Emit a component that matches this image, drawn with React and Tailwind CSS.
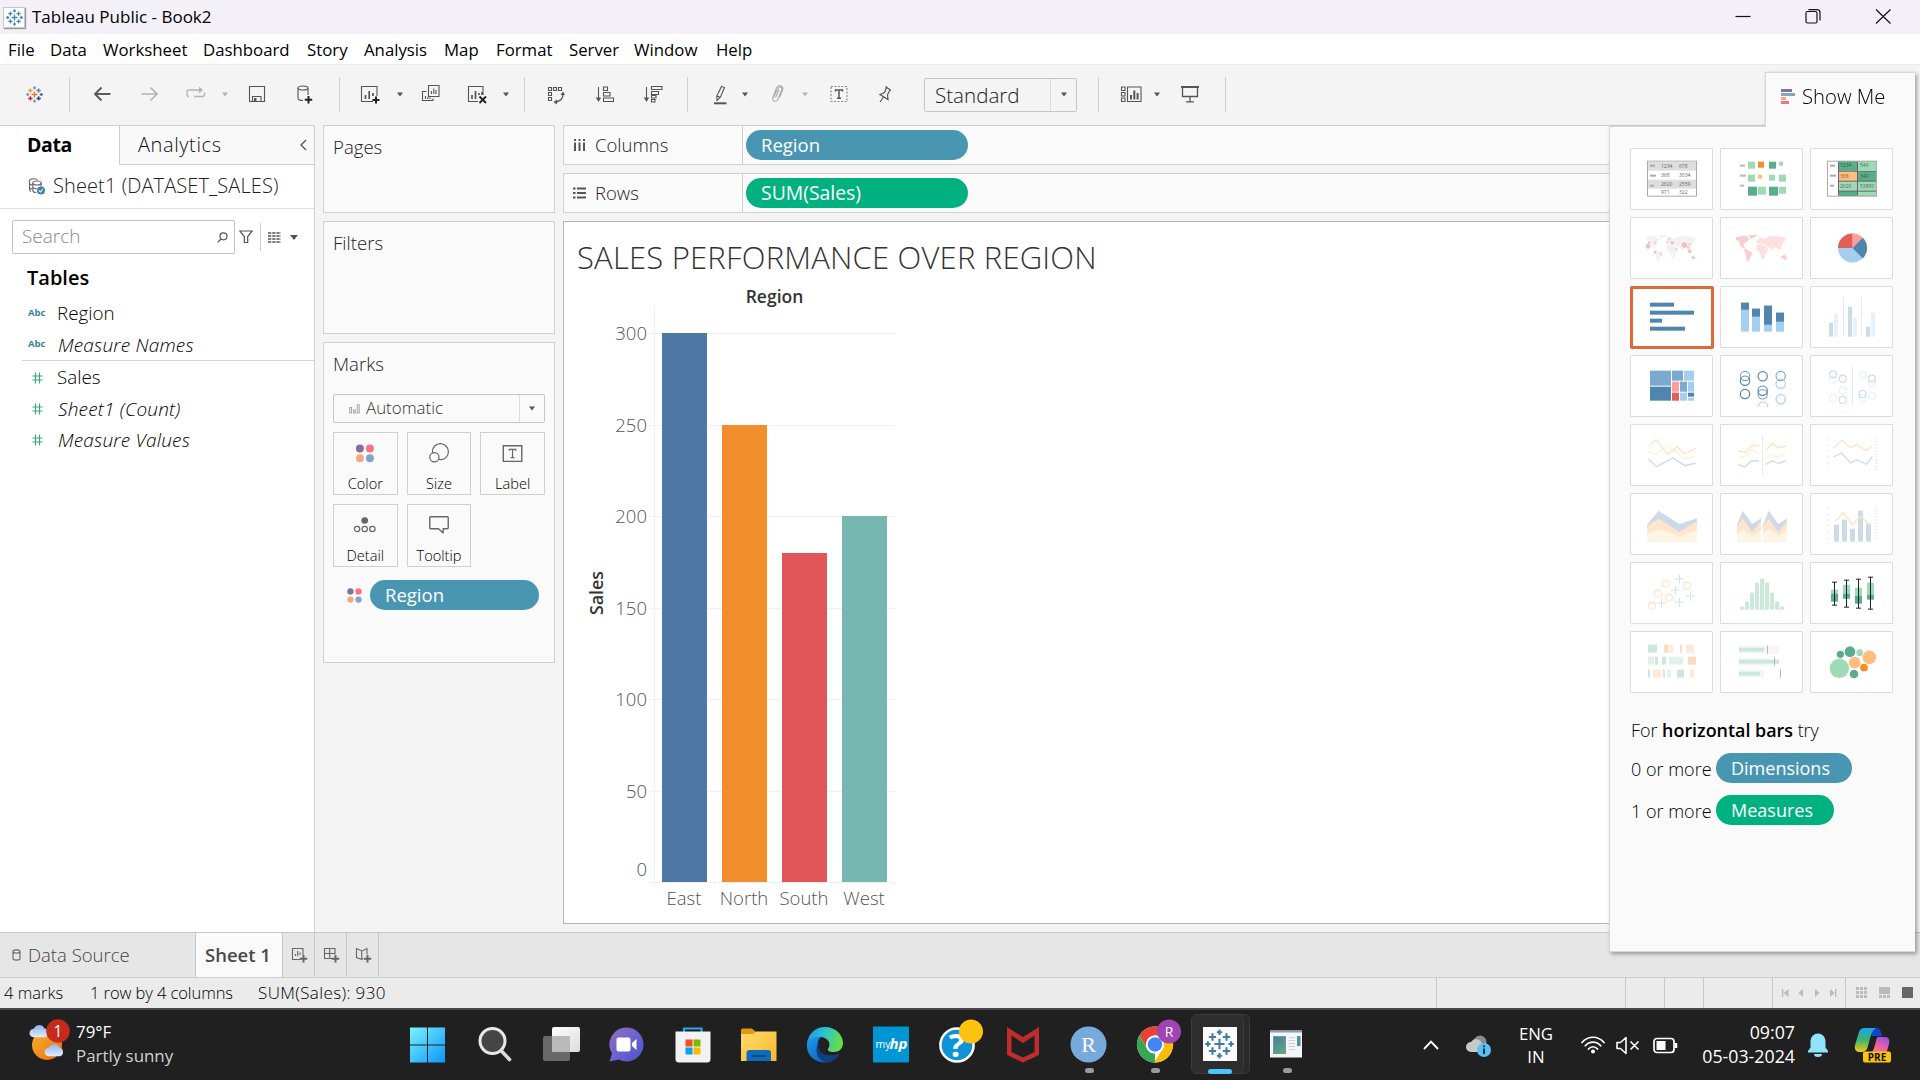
import React from 'react';

/* ---------- shared bits ---------- */

function Caret({ className = '', color = '#555' }) {
  return (
    <svg width="6" height="5" viewBox="0 0 6 5" className={'shrink-0 ' + className}>
      <path d="M0 0.5H6L3 4.5Z" fill={color} />
    </svg>
  );
}

function Tool({ w, className = '', children, stroke = '#555' }) {
  return (
    <svg width={w} height="21" viewBox={`0 0 ${w} 21`} fill="none" stroke={stroke} strokeWidth="1.1" className={'shrink-0 ' + className}>
      {children}
    </svg>
  );
}

function Sep({ className }) {
  return <div className={'h-[35px] w-px shrink-0 bg-[#cfcfcf] ' + className} />;
}

function TableauMark({ size, h, colors, sw = 1.5, className = '' }) {
  const arms = [
    [12, 12, 4.2], [6.2, 6.4, 3], [17.8, 6.4, 3], [6.2, 17.6, 3], [17.8, 17.6, 3],
    [12, 2.6, 2.2], [12, 21.4, 2.2], [2.4, 12, 2.2], [21.6, 12, 2.2],
  ];
  return (
    <svg width={size} height={h || size} viewBox="0 0 24 24" preserveAspectRatio="none" fill="none" strokeWidth={sw} className={'shrink-0 ' + className}>
      {arms.map(([x, y, r], i) => (
        <path key={i} d={`M${x - r} ${y}H${x + r}M${x} ${y - r}V${y + r}`} stroke={colors[i % colors.length]} />
      ))}
    </svg>
  );
}

function ColorDots({ w, className = '' }) {
  return (
    <svg width={w} height={w} viewBox="0 0 20 20" className={className}>
      <circle cx="4.6" cy="4.6" r="4.2" fill="#84709b" />
      <circle cx="15.4" cy="4.6" r="4.2" fill="#fc7182" />
      <circle cx="4.6" cy="15.4" r="4.2" fill="#f5a77e" />
      <circle cx="15.4" cy="15.4" r="4.2" fill="#81a3cc" />
    </svg>
  );
}

/* ---------- top bars ---------- */

function TitleBar() {
  return (
    <div className="flex h-[34px] items-center bg-[#f3f0f8]">
      <div className="ml-[3px] flex h-[21px] w-[22px] items-center justify-center border border-[#c8c8c8] bg-white shadow-[1px_1px_1px_#999]">
        <TableauMark size={17} h={17} colors={['#3d8bbd']} sw={1.8} />
      </div>
      <span className="ml-[7px] text-[17px] text-black">Tableau Public - Book2</span>
      <svg width="160" height="34" viewBox="0 0 160 34" fill="none" stroke="#111" strokeWidth="1.2" className="ml-auto mr-[25px]">
        <path d="M0.5 16.5H15.5" />
        <path d="M71 13a1.5 1.5 0 0 1 1.5-1.5h8A1.5 1.5 0 0 1 82 13v8.500a1.500 1.500 0 0 1-1.500 1.500h-8a1.500 1.500 0 0 1-1.500-1.500z" />
        <path d="M73.500 9.700H82a3 3 0 0 1 3 3V20.500" />
        <path d="M141 9.500L155.500 23.500M155.500 9.500L141 23.500" />
      </svg>
    </div>
  );
}

function MenuBar() {
  return (
    <div className="flex h-[30px] items-center bg-white pl-[8px] pt-[2px] text-[16.800px] text-black">
      <span className="w-[42px]">File</span>
      <span className="w-[53px]">Data</span>
      <span className="w-[100px]">Worksheet</span>
      <span className="w-[104px]">Dashboard</span>
      <span className="w-[57px]">Story</span>
      <span className="w-[80px]">Analysis</span>
      <span className="w-[52px]">Map</span>
      <span className="w-[73px]">Format</span>
      <span className="w-[65px]">Server</span>
      <span className="w-[82px]">Window</span>
      <span>Help</span>
    </div>
  );
}

function Toolbar() {
  return (
    <div className="flex h-[61px] items-center border-t border-[#ebebeb] bg-[#f4f4f4] pb-px">
      <TableauMark size={17} h={17} className="ml-[26px] mr-px mb-px" colors={['#e8762d', '#eb9b3b', '#5b879b', '#c72037', '#1f457e', '#7199a6', '#7099a6', '#7199a6', '#5b6591']} sw={1.9} />
      <Sep className="ml-[25px]" />
      <Tool w={18} className="ml-[23px]" stroke="#5a5a5a"><path strokeWidth="1.9" d="M17.500 10H2M8.500 3.500L2 10l6.500 6.500" /></Tool>
      <Tool w={18} className="ml-[30px]" stroke="#b4b4b4"><path strokeWidth="1.7" d="M0.500 10H16M9.500 3.500L16 10l-6.500 6.500" /></Tool>
      <Tool w={20} className="ml-[27px]" stroke="#b4b4b4">
        <path strokeWidth="1.300" d="M3 12.500H2.500A2 2 0 0 1 1 10.500V8a2 2 0 0 1 2-2h11.500M8 12.500h8.500a2 2 0 0 0 2-2V8.500" />
        <path d="M13 2.500L17 6l-4 3.500z" fill="#b4b4b4" stroke="none" />
      </Tool>
      <Caret className="ml-[16px]" color="#b4b4b4" />
      <Tool w={18} className="ml-[20px]">
        <path d="M1.500 2.500H16.500V17.500H1.500zM4.500 17.500V12.500H13V17.500" /><path d="M6 14h2.500v3.500H6z" fill="#555" stroke="none" />
      </Tool>
      <Tool w={18} className="ml-[30px]">
        <ellipse cx="7" cy="4" rx="5" ry="2" /><path d="M2 4v10.500c0 1.200 2 2 5 2M12 4v7" />
        <path stroke="#222" strokeWidth="2" d="M12.500 12v7.500M8.800 15.700H16.200" />
      </Tool>
      <Sep className="ml-[25px]" />
      <Tool w={20} className="ml-[20px]">
        <path d="M13 17.500H1.500V2.500H17V12" /><path strokeWidth="1.700" d="M5.500 15v-4M9.200 15V7M12.900 12V9" />
        <path stroke="#222" strokeWidth="2" d="M16 12.500v7M12.500 16H19.500" />
      </Tool>
      <Caret className="ml-[17px]" />
      <Tool w={20} className="ml-[18px]">
        <path d="M7.500 1.500H18V12.500H7.500zM5.500 7.500H1.500V16.500H12V14.500" /><path d="M10.500 10V7M12.800 10V4.500M15 10V6M4.500 15v-3M6.800 15v-2M9 15v-1.500" />
      </Tool>
      <Tool w={20} className="ml-[26px]">
        <path d="M11 17.500H1.500V2.500H16V11" /><path strokeWidth="1.700" d="M5 15v-4M8.500 15V7M12 11V9M15 11V8" />
        <path stroke="#222" strokeWidth="1.900" d="M12.500 12.500l6.500 6.500M19 12.500l-6.500 6.500" />
      </Tool>
      <Caret className="ml-[16px]" />
      <Sep className="ml-[15px]" />
      <Tool w={18} className="ml-[22px]">
        <path d="M1.500 3.500h3v3h-3zM6.500 3.500h3v3h-3zM11.500 3.500h3v3h-3zM1.500 8.500h3v3h-3zM1.500 13.500h3v3h-3z" />
        <path strokeWidth="1.300" d="M16 10c0 4-2.500 7-7 8" /><path d="M13.500 11L16 7.500 18 11zM10 15.500L6.500 18l3.500 2.500z" fill="#555" stroke="none" />
      </Tool>
      <Tool w={20} className="ml-[30px]">
        <path d="M3.500 3V15" /><path d="M0.800 13.500H6.200L3.500 18z" fill="#555" stroke="none" />
        <path d="M8.500 3h4v3.500h-4zM8.500 8.500h6.500v3.500H8.500zM8.500 14h10v3.500h-10z" />
      </Tool>
      <Tool w={20} className="ml-[28px]">
        <path d="M3.500 3V15" /><path d="M0.800 13.500H6.200L3.500 18z" fill="#555" stroke="none" />
        <path d="M8.500 2.500h10.500v3h-10.500zM8.500 7.500h7v3h-7zM8.500 11.500h4.500v2.500H8.500zM8.500 15.500h3.500v2.500h-3.500z" />
      </Tool>
      <Sep className="ml-[24px]" />
      <Tool w={18} className="ml-[24px]">
        <path d="M9.500 2.500L12.500 3.500 8.500 13 5 16.500 4.800 12zM4.800 12l3.700 1.200" /><path strokeWidth="2" d="M2 19.300H14.500" />
      </Tool>
      <Caret className="ml-[12px]" />
      <Tool w={18} className="ml-[21px]" stroke="#ababab">
        <path d="M4.500 13L8.500 5.500c2-4 5.500-2.500 4 1L8.800 15.500c-1.500 3-6 2-5-1.500L7.500 4c1.500-3.500 6.500-3 6.500 1L10.500 13.500M6.500 13.500L10 6" />
      </Tool>
      <Caret className="ml-[15px]" color="#b4b4b4" />
      <Tool w={18} className="ml-[22px]">
        <path stroke="#888" strokeDasharray="2 1.500" d="M1 2.500H17V17.500H1z" />
        <path strokeWidth="1.500" d="M5.500 7.500V6H12.500V7.500M9 6V14M7 14.200H11" />
      </Tool>
      <Tool w={18} className="ml-[28px]">
        <path strokeWidth="1.200" d="M9.500 2.500L15 6.500M10.500 3.500L8.500 8.500 4 10.500 12 15.500 11.500 10.800 14 6M7.500 13L4 18" />
      </Tool>
      <div className="ml-[30px] flex h-[34px] w-[153px] rounded-[2px] border border-[#c6c6c6]">
        <span className="w-[126px] border-r border-[#dcdcdc] pl-[10px] text-[20.600px] font-light leading-[32px] text-[#222]">Standard</span>
        <span className="flex flex-1 items-center justify-center"><Caret /></span>
      </div>
      <Sep className="ml-[21px]" />
      <Tool w={22} className="ml-[21px]">
        <path d="M1.500 3h3.500v3.500H1.500zM1.500 8.500h3.500v3.500H1.500zM1.500 14h3.500v3.500H1.500zM7.500 3H21V17.500H7.500z" /><path strokeWidth="2" d="M11 15.500V11M14.300 15.500V6.500M17.600 15.500V9" />
      </Tool>
      <Caret className="ml-[12px]" />
      <Tool w={20} className="ml-[20px]">
        <path strokeWidth="2" d="M1 3H19" /><path strokeWidth="1.300" d="M2.500 4V12.500H17.500V4M10 12.500V17.500M6 17.800H14" />
      </Tool>
      <Sep className="ml-[25px]" />
    </div>
  );
}

/* ---------- data pane ---------- */

function Field({ type, label, italic }) {
  return (
    <div className="flex h-[31px] items-center">
      {type === 'abc' ? (
        <span className="w-[57px] pl-[28px] text-[9.500px] font-bold text-[#3b7f9f]">Abc</span>
      ) : (
        <span className="w-[57px] pl-[32px]">
          <svg width="11" height="12" viewBox="0 0 11 12" stroke="#3ea77c" strokeWidth="1.200" fill="none"><path d="M3.500 0.500V11.500M7.500 0.500V11.500M0.500 4H10.500M0.500 8H10.500" /></svg>
        </span>
      )}
      <span className={italic ? 'pl-px pt-px text-[19px] font-light italic tracking-[0.200px] text-black' : 'text-[18.800px] font-light text-black'}>{label}</span>
    </div>
  );
}

function DataPane() {
  return (
    <div className="flex w-[315px] shrink-0 flex-col border-r border-t border-[#cfcfcf] bg-white">
      <div className="flex h-[39px]">
        <span className="w-[119px] pl-[27px] text-[19.500px] font-bold leading-[38px] tracking-[-0.400px] text-black">Data</span>
        <div className="flex flex-1 items-center border-b border-l border-[#cfcfcf] bg-[#f9f9f9] pl-[18px]">
          <span className="text-[20px] font-light tracking-[0.600px] text-[#111]">Analytics</span>
          <svg width="7" height="12" viewBox="0 0 7 12" fill="none" stroke="#555" strokeWidth="1.300" className="ml-auto mr-[7px]"><path d="M6 1L1 6l5 5" /></svg>
        </div>
      </div>
      <div className="flex h-[44px] items-center border-b border-[#dedede] pb-px pl-[28px]">
        <svg width="18" height="18" viewBox="0 0 18 18" fill="none" stroke="#666" strokeWidth="1.100">
          <path d="M3 14.500C1.500 14 1.500 13 1.500 12V3.500C2 1.500 8 1 9.500 3M1.500 6.500C2 8 4 8 4.500 8M1.500 10.500c.5 1.500 2 1.500 3 1.500" />
          <ellipse cx="9" cy="6" rx="4.200" ry="2" /><path d="M4.800 6v7.500c0 1.500 2 2 3.500 2M13.200 6v3.500M4.800 9.800c.5 1.500 2.500 2 4 2" />
          <circle cx="13" cy="13.500" r="4" fill="#3b84a3" stroke="none" /><path stroke="#fff" d="M11 13.500l1.500 1.500 2.500-3" />
        </svg>
        <span className="ml-[7px] text-[20px] font-light tracking-[0.100px] text-[#222]">Sheet1 (DATASET_SALES)</span>
      </div>
      <div className="mt-[11px] flex h-[34px] items-center pl-[12px]">
        <div className="flex h-[34px] w-[223px] items-center rounded-[2px] border border-[#c4c4c4] pl-[9px]">
          <span className="pb-[2px] text-[19px] font-light text-[#8a8a8a]">Search</span>
          <svg width="11" height="11" viewBox="0 0 11 11" fill="none" stroke="#555" strokeWidth="1.200" className="ml-auto mr-[6px]"><circle cx="6.500" cy="4.300" r="3.500" /><path d="M4 7L0.700 10.300" /></svg>
        </div>
        <svg width="14" height="14" viewBox="0 0 14 14" fill="none" stroke="#555" strokeWidth="1.200" className="ml-[4px]"><path d="M0.800 1H13.200L8.700 6.500V12.500H5.300V6.500z" /></svg>
        <div className="ml-[7px] h-[28px] w-px bg-[#cfcfcf]" />
        <svg width="13" height="11" viewBox="0 0 13 11" stroke="#555" strokeWidth="1.400" className="ml-[7px]"><path strokeDasharray="3.300 0.900" d="M0 1H13M0 4H13M0 7H13M0 10H13" /></svg>
        <svg width="8" height="5" viewBox="0 0 8 5" className="ml-[9px]"><path d="M0 0H8L4 5z" fill="#555" /></svg>
      </div>
      <span className="mt-[9px] h-[30px] pl-[27px] text-[20px] font-semibold leading-[30px] text-black">Tables</span>
      <div className="mt-[5px] flex flex-col">
        <Field type="abc" label="Region" />
        <Field type="abc" label="Measure Names" italic />
        <div className="ml-[22px] h-px bg-[#d6d6d6]" />
        <div className="mt-px flex flex-col">
          <Field type="num" label="Sales" />
          <Field type="num" label="Sheet1 (Count)" italic />
          <Field type="num" label="Measure Values" italic />
        </div>
      </div>
    </div>
  );
}

/* ---------- cards ---------- */

function MarkButton({ label, children }) {
  return (
    <div className="flex h-[63px] flex-col items-center border border-[#cfcfcf]">
      <svg width="30" height="26" viewBox="0 0 30 26" fill="none" stroke="#666" strokeWidth="1.300" className="mt-[9px]">{children}</svg>
      <span className="mt-[6px] text-[14.600px] font-light leading-[22px] text-black">{label}</span>
    </div>
  );
}

function Cards() {
  return (
    <div className="ml-[8px] flex w-[232px] shrink-0 flex-col gap-[8px] text-[18.600px] font-light text-[#222]">
      <div className="h-[88px] border border-[#cfcfcf] bg-[#fafafa] pl-[9px] leading-[41px]">Pages</div>
      <div className="h-[113px] border border-[#cfcfcf] bg-[#fafafa] pl-[9px] leading-[41px]">Filters</div>
      <div className="flex h-[321px] flex-col border border-[#cfcfcf] bg-[#fafafa] px-[9px]">
        <span className="h-[51px] leading-[41px]">Marks</span>
        <div className="flex h-[29px] w-[212px] rounded-[2px] border border-[#c6c6c6]">
          <div className="flex w-[186px] items-center border-r border-[#dcdcdc] pl-[15px]">
            <svg width="11" height="10" viewBox="0 0 11 10" fill="none" stroke="#aaa" strokeWidth="1.100"><path d="M0.700 3.500H2.500V9H0.700zM4.500 6H6.300V9H4.500zM8.300 0.700H10.200V9H8.300z" /></svg>
            <span className="ml-[6px] pb-px text-[16.900px] leading-[26px] text-[#333]">Automatic</span>
          </div>
          <div className="flex flex-1 items-center justify-center pr-px"><Caret /></div>
        </div>
        <div className="mt-[9px] grid w-[212px] grid-cols-3 gap-[9px]">
          <MarkButton label="Color">
            <g stroke="none"><circle cx="9.500" cy="7" r="4.300" fill="#84709b" /><circle cx="20.300" cy="7" r="4.300" fill="#fc7182" /><circle cx="9.500" cy="17.600" r="4.300" fill="#f5a77e" /><circle cx="20.300" cy="17.600" r="4.300" fill="#81a3cc" /></g>
          </MarkButton>
          <MarkButton label="Size">
            <circle cx="16.500" cy="10.500" r="8.700" /><circle cx="10" cy="16.500" r="5" fill="#fafafa" />
          </MarkButton>
          <MarkButton label="Label">
            <path d="M4.500 4H24.500V21H4.500z" strokeWidth="1.500" /><path d="M11 9.500V8H18V9.500M14.500 8V17M12.500 17H16.500" />
          </MarkButton>
          <MarkButton label="Detail">
            <circle cx="14.700" cy="7" r="3.600" fill="#666" stroke="none" /><circle cx="6.400" cy="16.300" r="2.900" /><circle cx="14.700" cy="16.300" r="2.900" /><circle cx="23" cy="16.300" r="2.900" />
          </MarkButton>
          <MarkButton label="Tooltip">
            <path strokeWidth="1.500" strokeLinejoin="round" d="M6 3H24a1 1 0 0 1 1 1V15a1 1 0 0 1-1 1H19.500V20.500L14.500 16H6a1 1 0 0 1-1-1V4a1 1 0 0 1 1-1z" />
          </MarkButton>
        </div>
        <div className="mt-[13px] flex items-center pl-[14px]">
          <ColorDots w={15} />
          <span className="ml-[8px] h-[30px] w-[169px] rounded-full bg-[#4996b2] pl-[15px] text-[18.500px] font-normal leading-[30px] text-white">Region</span>
        </div>
      </div>
    </div>
  );
}

/* ---------- shelves and view ---------- */

function Shelf({ label, icon, children }) {
  return (
    <div className="flex h-[40px] items-center border border-[#cfcfcf] bg-[#fafafa]">
      <div className="flex h-full w-[179px] items-center border-r border-[#cfcfcf] pl-[9px]">
        <svg width="13" height="12" viewBox="0 0 13 12" fill="none" stroke="#555" strokeWidth="2">{icon}</svg>
        <span className="ml-[9px] text-[18.500px] font-light text-[#222]">{label}</span>
      </div>
      {children}
    </div>
  );
}

const BARS = [
  ['East', 662, 333, '#4e79a7'], ['North', 722, 425, '#f28e2b'], ['South', 782, 553, '#e15759'], ['West', 842, 516, '#76b7b2'],
];
const TICKS = [[300, 333.5], [250, 425.5], [200, 516.5], [150, 608.5], [100, 699.5], [50, 791.5]];

function BarChart() {
  return (
    <svg width="360" height="635" viewBox="564 280 360 635" className="block" fontSize="18.500">
      <text x="774.500" y="302.500" textAnchor="middle" fontSize="17.500" fontWeight="600" fill="#333">Region</text>
      <text transform="translate(602.500 593) rotate(-90)" textAnchor="middle" fontSize="17.800" fontWeight="600" fill="#333">Sales</text>
      <g stroke="#f0f0f0" strokeWidth="1">
        <path d="M654.500 306V886" />
        {TICKS.map(([v, y]) => <path key={v} d={`M649 ${y}H895`} />)}
        <path d="M649 882.500H895M714.500 882V886M774.500 882V886M834.500 882V886M894.500 882V886" />
      </g>
      {TICKS.map(([v, y]) => <text key={v} x="647" y={y + 6.500} textAnchor="end" fontWeight="300" fill="#555">{v}</text>)}
      <text x="647" y="875.500" textAnchor="end" fontWeight="300" fill="#555">0</text>
      {BARS.map(([n, x, y, c]) => (
        <g key={n}>
          <rect x={x} y={y} width="45" height={882 - y} fill={c} />
          <text x={x + 22} y="905" textAnchor="middle" fontWeight="300" fill="#555">{n}</text>
        </g>
      ))}
    </svg>
  );
}

function Workspace() {
  return (
    <div className="ml-[8px] mr-[8px] flex flex-1 flex-col gap-[8px]">
      <Shelf label="Columns" icon={<path d="M2 0V2M6.500 0V2M11 0V2M2 3.500V12M6.500 3.500V12M11 3.500V12" />}>
        <span className="ml-[3px] h-[30px] w-[222px] rounded-full bg-[#4996b2] pl-[15px] text-[18.500px] leading-[30px] text-white">Region</span>
      </Shelf>
      <Shelf label="Rows" icon={<path d="M0 1.500H2.500M0 6H2.500M0 10.500H2.500M4 1.500H13M4 6H13M4 10.500H13" />}>
        <span className="ml-[3px] h-[30px] w-[222px] rounded-full bg-[#00b180] pl-[15px] text-[19.400px] leading-[30px] text-white">SUM(Sales)</span>
      </Shelf>
      <div className="flex h-[703px] flex-col border border-[#b4b4b4] bg-white">
        <h1 className="h-[58px] pl-[13px] pt-[13px] text-[31px] font-light leading-[44px] tracking-[0.200px] text-[#333]">SALES PERFORMANCE OVER REGION</h1>
        <BarChart />
      </div>
    </div>
  );
}

/* ---------- Show Me panel ---------- */

const WORLD = 'M138 533L150 530 165 528 173 531 171 536 180 538 172 545 164 550 160 558 167 566 160 566 152 560 147 545 138 541zM175 527L202 525 193 533 183 538zM161 568L172 570 188 581 181 592 174 607 170 600 168 585zM198 558L215 554 230 562 236 570 228 580 222 598 215 597 210 578 200 572zM199 550L203 540 213 532 222 537 240 530 262 530 288 534 284 544 276 556 270 572 262 566 254 562 248 574 240 564 232 562 222 552 208 552zM272 593L284 584 292 597 285 600z';

const bars = (list, fill) => list.map(([x, y, w, h], i) => <rect key={i} x={x} y={y} width={w} height={h} fill={fill} />);
const rings = (list, stroke, r) => list.map(([x, y], i) => <circle key={i} cx={x} cy={y} r={r} fill="none" stroke={stroke} strokeWidth="3.500" />);
const line = (d, stroke) => <path d={d} fill="none" stroke={stroke} strokeWidth="4" />;
const scaleTicks = (x, y) => <path stroke="#e8e8e8" strokeWidth="2.500" d={[0, 18, 36, 54, 73, 91].map((d) => `M${x} ${y + d}h9`).join('') + [0, 9, 18, 27, 36, 45, 54, 64, 73, 82, 91].map((d) => `M${x + 144} ${y + d}h9`).join('')} />;

const THUMBS = [
  { v: '93 268 243 180', c: (
    <g>
      <rect x="142.500" y="304.500" width="147" height="105" fill="#fff" stroke="#aaa" strokeWidth="3" />
      {bars([[144, 306, 144, 27], [144, 360, 144, 27]], '#dedede')}
      {bars([[150, 315, 15, 6], [150, 345, 18, 6], [150, 375, 12, 6]], '#aaa')}
      <g fontSize="15" fill="#666"><text x="183" y="325">1234</text><text x="237" y="325">678</text><text x="183" y="352">368</text><text x="237" y="352">3034</text><text x="183" y="379">2620</text><text x="237" y="379">2559</text><text x="183" y="403">971</text><text x="237" y="403">322</text></g>
    </g>) },
  { v: '363 268 243 180', c: (
    <g>
      {bars([[420, 315, 15, 6], [420, 345, 18, 6], [420, 375, 12, 6]], '#bbb')}
      {bars([[444, 306, 21, 21], [537, 306, 12, 12], [444, 345, 21, 21], [507, 345, 18, 18], [537, 345, 21, 21], [474, 381, 24, 24], [537, 381, 21, 21]], '#9edab5')}
      {bars([[507, 306, 21, 21], [444, 381, 27, 27], [507, 381, 27, 27]], '#59ad8b')}
      {bars([[474, 306, 18, 18]], '#f28e2b')}{bars([[474, 345, 12, 12]], '#ffbe7d')}
    </g>) },
  { v: '633 268 243 180', c: (
    <g>
      <rect x="682.500" y="304.500" width="147" height="105" fill="#fff" stroke="#aaa" strokeWidth="3" />
      {bars([[714, 306, 114, 102]], '#666')}
      {bars([[717, 306, 54, 28], [774, 336, 54, 27], [717, 396, 54, 12]], '#59ad8b')}
      {bars([[774, 306, 54, 28], [717, 366, 54, 27], [774, 366, 54, 27], [774, 396, 54, 12]], '#9edab5')}
      {bars([[717, 336, 54, 27]], '#ffbe7d')}
      {bars([[690, 315, 15, 6], [690, 345, 18, 6], [690, 375, 12, 6]], '#aaa')}
      <g fontSize="15" fill="#333" opacity="0.700"><text x="720" y="323">1234</text><text x="780" y="323">546</text><text x="720" y="354">368</text><text x="780" y="354">340</text><text x="720" y="384">2620</text><text x="780" y="384">53890</text></g>
    </g>) },
  { v: '93 475 243 180', c: (
    <g>
      <path d={WORLD} fill="#f2f2f2" />
      <g fill="#f0bcc0"><circle cx="144" cy="560" r="7" /><circle cx="253" cy="556" r="8" /><circle cx="217" cy="550" r="5" /><circle cx="269" cy="575" r="5.500" /><circle cx="165" cy="578" r="4" /><circle cx="147" cy="549" r="3.500" /><circle cx="279" cy="594" r="4" /><circle cx="264" cy="564" r="3.500" /></g>
      <g fill="#f9d2d2"><circle cx="207" cy="538" r="5" /><circle cx="166" cy="550" r="5" /><circle cx="183" cy="583" r="5" /><circle cx="228" cy="568" r="4" /><circle cx="202" cy="548" r="4" /><circle cx="268" cy="554" r="4" /></g>
    </g>) },
  { v: '363 475 243 180', c: (
    <g transform="translate(270 0)"><path d={WORLD} fill="#ffdfdf" /><path d={WORLD.split('M198')[0]} fill="#f8cfce" /><path d="M272 593L284 584 292 597 285 600z" fill="#f8cfce" /></g>) },
  { v: '633 475 243 180', c: (
    <g>
      <circle cx="757.500" cy="565" r="43.500" fill="#a5cfef" />
      <path d="M757.500 565H714A43.500 43.500 0 0 1 757.500 521.500z" fill="#e15f57" />
      <path d="M757.500 565V521.500A43.500 43.500 0 0 1 788.300 534.200z" fill="#ff9d9a" />
      <path d="M757.500 565L788.300 534.200A43.500 43.500 0 0 1 788.300 595.800z" fill="#5085ad" />
    </g>) },
  { v: '93 682 243 180', selected: true, c: <g>{bars([[150, 729, 72, 12], [150, 753, 132, 12], [150, 777, 36, 12], [150, 801, 105, 12]], '#5085ad')}</g> },
  { v: '363 682 243 180', c: (
    <g>{bars([[423, 729, 24, 87], [456, 747, 24, 69], [492, 738, 24, 78], [528, 759, 24, 57]], '#a5cfef')}{bars([[423, 729, 24, 21], [456, 747, 24, 24], [492, 738, 24, 57], [528, 759, 24, 27]], '#5085ad')}</g>) },
  { v: '633 682 243 180', c: (
    <g>{bars([[687, 789, 12, 42], [744, 741, 12, 90], [798, 801, 12, 30]], '#cddbe8')}{bars([[702, 762, 12, 69], [759, 774, 12, 57], [813, 759, 12, 72]], '#e4f2fd')}{bars([[729, 711, 3, 120], [783, 711, 3, 120]], '#ebebeb')}</g>) },
  { v: '93 889 243 180', c: (
    <g>
      {bars([[150, 933, 63, 45], [216, 933, 33, 30], [240, 966, 21, 30]], '#7ca9cf')}
      {bars([[150, 981, 63, 42], [264, 999, 18, 12]], '#5085ad')}
      {bars([[252, 933, 30, 30], [264, 966, 18, 30], [240, 999, 21, 24], [264, 1014, 18, 9]], '#a5cfef')}
      {bars([[216, 966, 21, 30]], '#ff9d9a')}{bars([[216, 999, 21, 24]], '#e15f57')}
    </g>) },
  { v: '363 889 243 180', c: (
    <g>
      {rings([[435, 949], [542, 949], [488, 1004]], '#7ca9cf', 14)}
      {rings([[542, 972], [542, 1019]], '#a5cfef', 14)}
      {rings([[435, 963], [435, 1003], [488, 950], [488, 993]], '#5085ad', 14)}
      <path d="M475 1041a14 14 0 0 1 28 0" fill="none" stroke="#a5cfef" strokeWidth="3.500" />
    </g>) },
  { v: '633 889 243 180', c: (
    <g>{rings([[699, 960], [699, 1015], [788, 946], [728, 993], [788, 1015], [816, 971], [816, 1009]], '#e4f2fd', 10.500)}{rings([[699, 944], [728, 957], [728, 1021], [816, 957], [788, 1003]], '#cddbe8', 10.500)}{bars([[756, 918, 3, 120]], '#ebebeb')}</g>) },
  { v: '93 46 243 180', c: (
    <g>{line('M145 125L169 134 204 107 254 148 287 141', '#fff1d3')}{line('M149 107L169 90 203 134 232 111 254 132 288 115', '#ffe3c6')}{line('M145 148L169 171 219 145 255 168 287 160', '#cddbe8')}</g>) },
  { v: '363 46 243 180', c: (
    <g>{line('M414 144L436 140 456 119 476 133M497 143L516 137 535 142 558 129', '#fff1d3')}{line('M414 124L436 128 455 107 477 109M497 123L517 100 535 115 558 109', '#ffe3c6')}{line('M414 165L435 172 455 153 477 154M497 165L516 153 535 161 558 153', '#cddbe8')}{bars([[486, 75, 3, 120]], '#ebebeb')}</g>) },
  { v: '633 46 243 180', c: (
    <g>{line('M700 115L726 92 752 114 770 104 798 123 817 108', '#ffe3c6')}{line('M700 142L725 130 752 160 770 150 799 164 817 141', '#cddbe8')}{scaleTicks(681, 88)}</g>) },
  { v: '93 253 243 180', c: (
    <g><path d="M141 345L176 303 238 343 291 326V396H141z" fill="#cddbe8" /><path d="M141 350L176 327 238 367 291 335V396H141z" fill="#ffe5cb" /><path d="M141 373L176 358 238 379 291 363V396H141z" fill="#fff4e6" /></g>) },
  { v: '363 253 243 180', c: (
    <g>{[0, 78].map((d) => (
      <g key={d} transform={`translate(${d} 0)`}><path d="M411 345L428 303 457 343 483 326V396H411z" fill="#cddbe8" /><path d="M411 350L428 327 457 367 483 335V396H411z" fill="#ffe5cb" /><path d="M411 373L428 358 457 379 483 360V396H411z" fill="#fff4e6" /></g>
    ))}</g>) },
  { v: '633 253 243 180', c: (
    <g>{bars([[702, 345, 15, 51], [726, 330, 15, 66], [750, 357, 15, 39], [774, 303, 15, 93], [798, 342, 15, 54]], '#cddbe8')}{line('M706 334L731 309 757 345 782 320 810 346', '#ffe3c6')}{scaleTicks(681, 295)}</g>) },
  { v: '93 460 243 180', c: (
    <g>{rings([[198, 522], [261, 528], [174, 552], [207, 564], [156, 588]], '#ffe3c6', 10.500)}<path stroke="#cce7db" strokeWidth="3" d="M225 508h27M238.500 495v27M213 541h27M226.500 528v27M258 559h27M271.500 546v27M171 580h27M184.500 567v27M225 577h27M238.500 564v27" /></g>) },
  { v: '363 460 243 180', c: <g>{bars([[420, 591, 12, 9], [435, 576, 12, 24], [450, 549, 12, 51], [465, 519, 12, 81], [480, 507, 12, 93], [495, 519, 12, 81], [510, 549, 12, 51], [525, 576, 12, 24], [540, 591, 12, 9]], '#cce7db')}</g> },
  { v: '633 460 243 180', c: (
    <g>{bars([[693, 540, 21, 12], [729, 525, 21, 27], [765, 534, 21, 24], [801, 519, 21, 36]], '#9edab5')}{bars([[693, 552, 21, 24], [729, 552, 21, 15], [765, 558, 21, 24], [801, 555, 21, 15]], '#59ad8b')}
      <path stroke="#222" strokeWidth="3" d="M703.500 517V586M696 517.500h15M696 586.500h15M739.500 511V592M732 511.500h15M732 592.500h15M775.500 508V595M768 508.500h15M768 595.500h15M811.500 502V598M804 502.500h15M804 598.500h15" /></g>) },
  { v: '93 667 243 180', c: (
    <g>{bars([[144, 705, 27, 24], [165, 741, 9, 24], [186, 741, 12, 24], [144, 780, 6, 24], [231, 780, 21, 24]], '#cce7db')}{bars([[144, 741, 18, 24], [207, 741, 42, 24], [201, 780, 12, 24]], '#e1f3e9')}{bars([[192, 705, 12, 24], [240, 705, 6, 24], [264, 741, 24, 24], [189, 780, 6, 24]], '#fbdcc0')}{bars([[207, 705, 12, 24], [258, 705, 24, 24], [159, 780, 24, 24], [270, 780, 12, 24]], '#ffead6')}</g>) },
  { v: '363 667 243 180', c: (
    <g>{bars([[417, 708, 120, 24], [417, 744, 90, 24], [417, 780, 75, 24]], '#f6f6f6')}{bars([[417, 714, 75, 12], [417, 750, 120, 12], [417, 786, 63, 12]], '#cce7db')}{bars([[501, 708, 3, 24], [522, 744, 3, 24], [540, 780, 3, 24]], '#b5b5b5')}</g>) },
  { v: '633 667 243 180', c: (
    <g><g fill="#9edab5"><circle cx="718" cy="776" r="29" /><circle cx="779" cy="729" r="10" /></g><g fill="#59ad8b"><circle cx="721" cy="734" r="11" /><circle cx="750" cy="726" r="16" /><circle cx="762" cy="793" r="13" /></g><g fill="#ffbe7d"><circle cx="808" cy="743" r="20.500" /><circle cx="764" cy="759" r="17.500" /></g><circle cx="792" cy="774" r="11.500" fill="#f28e2b" /></g>) },
];

function ShowMe() {
  return (
    <div className="absolute left-[1609px] top-[72px] flex w-[306px] flex-col drop-shadow-[2px_2px_2px_rgba(0,0,0,0.350)]">
      <div className="relative z-10 ml-auto -mb-px flex h-[55px] w-[150px] items-center border-l border-t border-[#d8d8d8] bg-[#fafafa] pb-[8px] pl-[15px]">
        <svg width="14" height="15" viewBox="0 0 14 15">
          <rect width="11" height="3" fill="#84709b" /><rect y="4" width="14" height="3" fill="#81a3cc" /><rect y="8" width="5" height="3" fill="#f5a77e" /><rect y="12" width="8" height="3" fill="#fc7182" />
        </svg>
        <span className="ml-[7px] text-[20.300px] font-light leading-[28px] text-black">Show Me</span>
      </div>
      <div className="flex h-[826px] flex-col border border-r-0 border-[#d8d8d8] bg-[#fafafa] pl-[20px] pt-[21px]">
        <div className="grid w-[263px] grid-cols-3 gap-[7px]">
          {THUMBS.map((t, i) => (
            <div key={i} className="relative h-[62px] w-[83px] rounded-[1px] border border-[#dcdcdc] bg-white">
              <svg width="81" height="60" viewBox={t.v} className="block">{t.c}</svg>
              {t.selected && <div className="absolute -bottom-[2px] -left-px -right-[2px] -top-px rounded-[2px] border-[3px] border-[#dd6a36]" />}
            </div>
          ))}
        </div>
        <p className="mt-[23px] whitespace-nowrap pl-[1px] text-[17.900px] font-light leading-[28px] text-black">For <b className="font-semibold">horizontal bars</b> try</p>
        <div className="mt-[9px] flex h-[30px] items-center text-[18px] font-light text-black">
          <span className="w-[86px] whitespace-nowrap pl-px pt-[2px]">0 or more</span>
          <span className="h-[30px] w-[136px] rounded-full bg-[#4996b2] pl-[15px] text-[18px] font-normal leading-[30px] text-white">Dimensions</span>
        </div>
        <div className="mt-[12px] flex h-[30px] items-center text-[18px] font-light text-black">
          <span className="w-[86px] whitespace-nowrap pl-px pt-[2px]">1 or more</span>
          <span className="h-[30px] w-[118px] rounded-full bg-[#00b180] pl-[15px] text-[18px] font-normal leading-[30px] text-white">Measures</span>
        </div>
      </div>
    </div>
  );
}

/* ---------- sheet tabs and status ---------- */

function SheetTabs() {
  const cell = 'flex w-[32px] items-center justify-center border-r border-[#c6c6c6] pl-[2px]';
  return (
    <div className="flex h-[45px] border-t border-[#c6c6c6] bg-[#e6e6e6]">
      <div className="flex w-[196px] items-center border-r border-[#c6c6c6] pl-[12px]">
        <svg width="9" height="12" viewBox="0 0 9 12" fill="none" stroke="#666" strokeWidth="1.100"><path d="M1 2.500C1 0.300 8 0.300 8 2.500V9.500C8 11.700 1 11.700 1 9.500zM1 2.500C1 4.500 8 4.500 8 2.500" /></svg>
        <span className="ml-[7px] text-[18.500px] font-light text-[#444]">Data Source</span>
      </div>
      <div className="flex w-[87px] items-center border-r border-[#c6c6c6] bg-[#fafafa] pb-px pl-[9px] text-[18.500px] font-semibold text-[#4a4a4a]">Sheet 1</div>
      <div className={cell}>
        <svg width="17" height="16" viewBox="0 0 17 16" fill="none" stroke="#666" strokeWidth="1.100"><path d="M9 12.500H1.500V1.500H12V8" /><path d="M4.500 9V7M6.700 9V4M9 8V5.500" /><path strokeWidth="2" d="M12.500 8v7.500M8.800 11.700H16.200" /></svg>
      </div>
      <div className={cell}>
        <svg width="17" height="16" viewBox="0 0 17 16" fill="none" stroke="#666" strokeWidth="1.100"><path d="M9 11.500H1.500V1.500H12V7.500M1.500 6.500H12M6.700 1.500V11.500" /><path strokeWidth="2" d="M12.500 8v7.500M8.800 11.700H16.200" /></svg>
      </div>
      <div className={cell}>
        <svg width="17" height="16" viewBox="0 0 17 16" fill="none" stroke="#666" strokeWidth="1.100"><path d="M8 11.500L6.700 12.500 1.500 10.500V1.500L6.700 4 12 1.500V7.500M6.700 4V12.500" /><path strokeWidth="2" d="M12.500 8v7.500M8.800 11.700H16.200" /></svg>
      </div>
    </div>
  );
}

function StatusBar() {
  return (
    <div className="flex h-[31px] items-stretch border-t border-[#cfcfcf] bg-[#ebebeb] text-[16.500px] font-light leading-[30px] text-black">
      <span className="w-[90px] pl-[4px]">4 marks</span>
      <span className="w-[168px] tracking-[-0.080px]">1 row by 4 columns</span>
      <span className="w-[1179px] border-r border-[#c6c6c6] text-[17px] tracking-[0.360px]">SUM(Sales): 930</span>
      <span className="w-[189px] border-r border-[#c6c6c6]" />
      <span className="w-[39px] border-r border-[#c6c6c6]" />
      <span className="w-[39px] border-r border-[#c6c6c6]" />
      <span className="w-[69px] border-r border-[#c6c6c6]" />
      <span className="flex w-[73px] items-center border-r border-[#c6c6c6] pl-[8px]">
        <svg width="56" height="8" viewBox="0 0 56 8" fill="#bababa"><path d="M1 0h1.300v8H1zM7.500 0v8L2.800 4zM22 0v8L17.500 4zM34 0v8L38.500 4zM49 0v8L53.700 4zM54 0h1.300v8H54z" /></svg>
      </span>
      <span className="flex items-center pl-[10px]">
        <svg width="58" height="12" viewBox="0 0 58 12" fill="#bababa">
          <path d="M0 0h3v3H0zM4 0h3v3H4zM8 0h3v3H8zM0 4h3v3H0zM4 4h3v3H4zM8 4h3v3H8zM0 8h3v3H0zM4 8h3v3H4zM8 8h3v3H8zM23 0h11v7H23zM23 8h3v3h-3zM27 8h3v3h-3zM31 8h3v3h-3z" />
          <rect x="46" width="11" height="11" rx="0.500" fill="#666" />
        </svg>
      </span>
    </div>
  );
}

/* ---------- taskbar ---------- */

function App36({ dot, children }) {
  return (
    <div className="relative flex w-[66px] shrink-0 items-center justify-center">
      <svg width="52" height="52" viewBox="0 0 52 52" fill="none">{children}</svg>
      {dot && <span className="absolute bottom-[7px] left-[29px] h-[5px] w-[9px] rounded-full bg-[#9a9a9a]" />}
    </div>
  );
}

function Cloud({ x, y, s }) {
  return <path transform={`translate(${x} ${y}) scale(${s})`} fill="url(#cloudFill)" d="M5 13a4.500 4.500 0 0 1 0-9A6 6 0 0 1 16 3.500 5 5 0 0 1 17 13z" />;
}

function Taskbar() {
  return (
    <div className="flex h-[72px] items-stretch border-t-2 border-[#474747] bg-[#202020] text-white">
      <div className="flex w-[396px] items-center pl-[28px]">
        <svg width="42" height="50" viewBox="0 0 42 50" className="mb-[9px]">
          <defs>
            <linearGradient id="cloudFill" x1="0" y1="0" x2="0" y2="1"><stop stopColor="#8fb4ee" /><stop offset="1" stopColor="#e2ecfb" /></linearGradient>
            <linearGradient id="sunFill" x1="0" y1="0" x2="1" y2="1"><stop stopColor="#f6b52c" /><stop offset="1" stopColor="#ec6a12" /></linearGradient>
          </defs>
          <circle cx="19" cy="29" r="15" fill="url(#sunFill)" />
          <Cloud x={1} y={9} s={0.950} /><Cloud x={16} y={28} s={0.950} />
          <circle cx="30" cy="15" r="11.800" fill="#c42b1c" />
          <text x="30" y="20.500" textAnchor="middle" fontSize="15.500" fill="#fff">1</text>
        </svg>
        <div className="mb-[2px] ml-[6px] flex flex-col text-[16.900px] leading-[24px]">
          <span>79°F</span>
          <span className="text-[#d0d0d0]">Partly sunny</span>
        </div>
      </div>

      <App36>
        <defs><linearGradient id="win" x1="0" y1="0" x2="1" y2="1"><stop stopColor="#7bf3ff" /><stop offset="1" stopColor="#0a95fb" /></linearGradient></defs>
        <path fill="url(#win)" d="M7 8.500h17v17h-17zM25 8.500h17v17H25zM7 26.500h17v17h-17zM25 26.500h17v17H25z" />
      </App36>
      <App36>
        <circle cx="23.500" cy="22" r="12.500" fill="#454545" stroke="#e8e8e8" strokeWidth="3" /><path stroke="#dcdcdc" strokeWidth="3.600" strokeLinecap="round" d="M32.500 32L40.500 40.500" />
      </App36>
      <App36>
        <defs><linearGradient id="tv" x1="0" y1="0" x2="1" y2="1"><stop stopColor="#fff" /><stop offset="1" stopColor="#dcdcdc" /></linearGradient></defs>
        <rect x="17" y="8" width="28" height="25" rx="2" fill="url(#tv)" /><rect x="8" y="17" width="27" height="25" rx="2" fill="#777" opacity="0.850" /><path d="M17 17H35V33H17z" fill="#b9b9b9" />
      </App36>
      <App36>
        <defs><linearGradient id="chat" x1="0" y1="0" x2="1" y2="1"><stop stopColor="#9c6cb8" /><stop offset="0.500" stopColor="#6a64cf" /><stop offset="1" stopColor="#4a52c8" /></linearGradient></defs>
        <path fill="url(#chat)" d="M25.500 8.500a17 17 0 0 1 0 34c-3 0-5-.7-7.500-2L8.500 42.500l2.500-8A17 17 0 0 1 25.500 8.500z" />
        <rect x="15.500" y="18.500" width="14" height="14" rx="2" fill="#fff" /><path fill="#fff" d="M31 24L35.500 20V31L31 27z" />
      </App36>
      <App36>
        <path stroke="#28a8ea" strokeWidth="2.200" d="M17 15V9.500H34.500V15" />
        <path fill="#f2f2f2" d="M8.500 12.500h35V40a3.500 3.500 0 0 1-3.500 3.500H12A3.500 3.500 0 0 1 8.500 40z" />
        <path fill="#f25022" d="M18.500 20.500h7v7h-7z" /><path fill="#7fba00" d="M26.500 20.500h7v7h-7z" /><path fill="#00a4ef" d="M18.500 28.500h7v7h-7z" /><path fill="#ffb900" d="M26.500 28.500h7v7h-7z" />
      </App36>
      <App36>
        <defs><linearGradient id="fold" x1="0" y1="0" x2="1" y2="1"><stop stopColor="#ffdc6b" /><stop offset="1" stopColor="#f8b92c" /></linearGradient></defs>
        <path fill="#e09a12" d="M8 11a1.500 1.500 0 0 1 1.500-1.500H19L23 13v6H8z" /><path fill="url(#fold)" d="M8 15H20L23 12.500H43.500V42H8z" />
        <path fill="#0f6cbd" d="M13.500 42V34a3 3 0 0 1 3-3H35a3 3 0 0 1 3 3V42z" /><path stroke="#0a4a86" strokeWidth="2" d="M18.500 37H33" />
      </App36>
      <App36>
        <defs>
          <linearGradient id="e1" x1="0" y1="0" x2="1" y2="0.300"><stop stopColor="#1a8fe0" /><stop offset="0.500" stopColor="#2cc3d5" /><stop offset="1" stopColor="#63dc4d" /></linearGradient>
          <linearGradient id="e2" x1="0" y1="0" x2="1" y2="1"><stop stopColor="#1c9df0" /><stop offset="1" stopColor="#0b4ea8" /></linearGradient>
        </defs>
        <path fill="url(#e2)" d="M8 25C9 18 17 15 22 18c-6 5-4 15 3 18 6 2 12 0 15-1-3 6-9 8.500-14 8.500C15 43.500 7 35 8 25z" />
        <path fill="#123f84" d="M20.500 23c-4 8 3 17 19.500 12-2 5-8 8-13 8.300-10-2-12-15-6.500-20.300z" />
        <path fill="url(#e1)" d="M8 25C9 14 17 8 26 8c11 0 18 8 18 16 0 6-4 9-9.500 9-4 0-7-1.500-5-4 3-5-1-10-7-11C16 17 10 20 8 25z" />
      </App36>
      <App36>
        <rect x="8" y="7.500" width="36" height="36" rx="1" fill="#0096d6" />
        <text x="10.500" y="29" fontSize="10.500" fill="#fff">my</text><text x="24.500" y="30" fontSize="15" fontWeight="700" fontStyle="italic" fill="#fff">hp</text>
      </App36>
      <App36>
        <circle cx="26" cy="26" r="16.600" fill="#0c93d8" stroke="#fff" strokeWidth="2.500" />
        <text x="25.500" y="38" textAnchor="middle" fontSize="33" fontWeight="700" fill="#fff">?</text>
        <circle cx="40" cy="12.500" r="12" fill="#ffc20e" />
      </App36>
      <App36><path fill="#bf2c2c" d="M10 8L26 18 42 8V36L26 43.500 10 36zM14.500 16.500V33L26 38.500 37.500 33V16.500L26 24z" fillRule="evenodd" /></App36>
      <App36 dot>
        <circle cx="25.500" cy="25.500" r="18" fill="#75aadb" />
        <text x="25.500" y="32.500" textAnchor="middle" fontSize="22" fill="#fff" fontFamily='"Liberation Serif", serif'>R</text>
      </App36>
      <App36 dot>
        <circle cx="26" cy="25.500" r="18" fill="#fff" />
        <path fill="#ea4335" d="M10.400 16.500A18 18 0 0 1 41.600 16.500H26A9 9 0 0 0 18.200 30z" />
        <path fill="#34a853" d="M10.400 16.500L18.200 30A9 9 0 0 0 26 34.500L26 43.500A18 18 0 0 1 10.400 16.500z" />
        <path fill="#fbbc04" d="M41.600 16.500A18 18 0 0 1 25 43.500L33.800 30A9 9 0 0 0 33.800 21V16.500z" />
        <circle cx="26" cy="25.500" r="9" fill="#fff" /><circle cx="26" cy="25.500" r="7.200" fill="#4285f4" />
        <circle cx="40" cy="12.500" r="12" fill="#a142b5" /><text x="40" y="17.500" textAnchor="middle" fontSize="14" fill="#fff">R</text>
      </App36>
      <div className="relative flex w-[66px] shrink-0 items-center justify-center">
        <span className="absolute left-[10px] top-[4px] h-[60px] w-[52px] rounded-[6px] border border-[#3c3c3c] bg-[#292929]" />
        <span className="absolute left-[3px] top-[4px] h-[60px] w-[53px] rounded-[6px] border border-[#3c3c3c] bg-[#2d2d2d]" />
        <span className="relative mb-[3px] mr-[3px] flex h-[34px] w-[34px] items-center justify-center bg-[#fafafa]"><TableauMark size={29} h={30} colors={['#3f7c9f']} sw={1.700} /></span>
        <span className="absolute bottom-[6px] left-[20px] h-[5px] w-[24px] rounded-full bg-[#4cc2ff]" />
      </div>
      <App36 dot>
        <defs><linearGradient id="doc" x1="0" y1="0" x2="0.500" y2="1"><stop stopColor="#4a7ba6" /><stop offset="1" stopColor="#57a878" /></linearGradient></defs>
        <rect x="9" y="11.500" width="32" height="27" fill="#f3f5f7" /><path fill="#8e9db0" d="M9 11.500h32v2H9z" />
        <rect x="12.500" y="17.500" width="12" height="17" fill="url(#doc)" stroke="#7b8fa5" /><path fill="#4c93a0" d="M36 17h3.500v10H36z" /><path stroke="#cfcfcf" strokeWidth="1.200" d="M27.500 18.500H34M27.500 21.500H34M27.500 24.500H34M27.500 27.500H34M27.500 30.500H34" />
      </App36>

      <div className="flex flex-1 items-center">
        <svg width="16" height="10" viewBox="0 0 16 10" fill="none" stroke="#fff" strokeWidth="1.900" className="ml-[103px]"><path d="M1 9L8 1.700 15 9" /></svg>
        <svg width="25" height="22" viewBox="0 0 25 22" className="ml-[27px] mt-[2px]">
          <circle cx="14" cy="7" r="6.500" fill="#8a8a8a" /><path fill="#c8c8c8" d="M5 17a5 5 0 0 1 0-10 6 6 0 0 1 11 2l-4 8z" /><circle cx="18" cy="15" r="7" fill="#5ac0f5" /><path stroke="#123" strokeWidth="1.800" d="M18 13.500V19M18 10.500V12.300" />
        </svg>
        <div className="ml-[24px] flex w-[42px] flex-col text-center text-[16.800px] leading-[23px]"><span>ENG</span><span>IN</span></div>
        <svg width="24" height="18" viewBox="0 0 24 18" fill="none" stroke="#fff" strokeWidth="1.700" strokeLinecap="round" className="ml-[24px]">
          <path d="M1 6.500C7-0.500 17-0.500 23 6.500M4.300 9.800C8.500 5 15.500 5 19.700 9.800M7.500 13C10 10 14 10 16.500 13" /><circle cx="12" cy="15.500" r="2" fill="#fff" stroke="none" />
        </svg>
        <svg width="25" height="19" viewBox="0 0 25 19" fill="none" stroke="#fff" strokeWidth="1.600" className="ml-[11px]"><path strokeLinejoin="round" d="M1 6.500H4.500L10 1.500V17.500L4.500 12.500H1zM14.500 5.500L22.500 13.500M22.500 5.500L14.500 13.500" /></svg>
        <svg width="25" height="17" viewBox="0 0 25 17" fill="none" stroke="#fff" strokeWidth="1.700" className="ml-[12px]"><rect x="1" y="1.500" width="20" height="14" rx="3" /><rect x="3.500" y="4" width="9" height="9" fill="#fff" stroke="none" /><path strokeWidth="2.500" d="M23 6V11" /></svg>
        <div className="mb-[2px] ml-[14px] flex w-[103px] flex-col text-right text-[17.800px] leading-[24px]"><span>09:07</span><span>05-03-2024</span></div>
        <svg width="20" height="24" viewBox="0 0 20 24" fill="#8fe3fb" className="ml-[13px]"><path d="M10 0.500a7.500 7.500 0 0 1 7.500 7.500v6.500L20 18v1.500H0V18l2.500-3.500V8A7.500 7.500 0 0 1 10 .5zM6 21H14a4 3 0 0 1-8 0z" /></svg>
        <svg width="38" height="36" viewBox="0 0 38 36" className="ml-[26px]">
          <defs>
            <linearGradient id="cp1" x1="0.300" y1="0" x2="0.300" y2="1"><stop stopColor="#1aa5f0" /><stop offset="0.500" stopColor="#3fb36a" /><stop offset="1" stopColor="#f0c81e" /></linearGradient>
            <linearGradient id="cp2" x1="0.700" y1="0" x2="0.300" y2="1"><stop stopColor="#9a52e8" /><stop offset="0.500" stopColor="#ee5fa0" /><stop offset="1" stopColor="#fb8a5c" /></linearGradient>
          </defs>
          <path fill="#1145cc" d="M16 1h6c4 0 5 3 6 8H18z" />
          <path fill="url(#cp1)" d="M10 1H22c-4 2-5 7-8 18-1 4-3 6-6 6H5C2 25 0 22 1 18L5 5C6 2 8 1 10 1z" />
          <path fill="url(#cp2)" d="M24 10H31c4 0 5 3 4 7L32 28H14c4 0 6-6 8-14 .5-2 1-4 2-4z" />
          <rect x="9" y="24.500" width="28" height="11" rx="2" fill="#fcc30b" /><text x="23" y="33.500" textAnchor="middle" fontSize="10" fontWeight="700" fill="#111">PRE</text>
        </svg>
      </div>
    </div>
  );
}

export default function App() {
  return (
    <div className="relative flex h-[1080px] w-[1920px] flex-col overflow-hidden whitespace-nowrap bg-[#f4f4f4] font-['Open_Sans','Noto_Sans',sans-serif]">
      <TitleBar />
      <MenuBar />
      <Toolbar />
      <div className="flex h-[807px] shrink-0">
        <DataPane />
        <Cards />
        <Workspace />
      </div>
      <SheetTabs />
      <StatusBar />
      <Taskbar />
      <ShowMe />
    </div>
  );
}
